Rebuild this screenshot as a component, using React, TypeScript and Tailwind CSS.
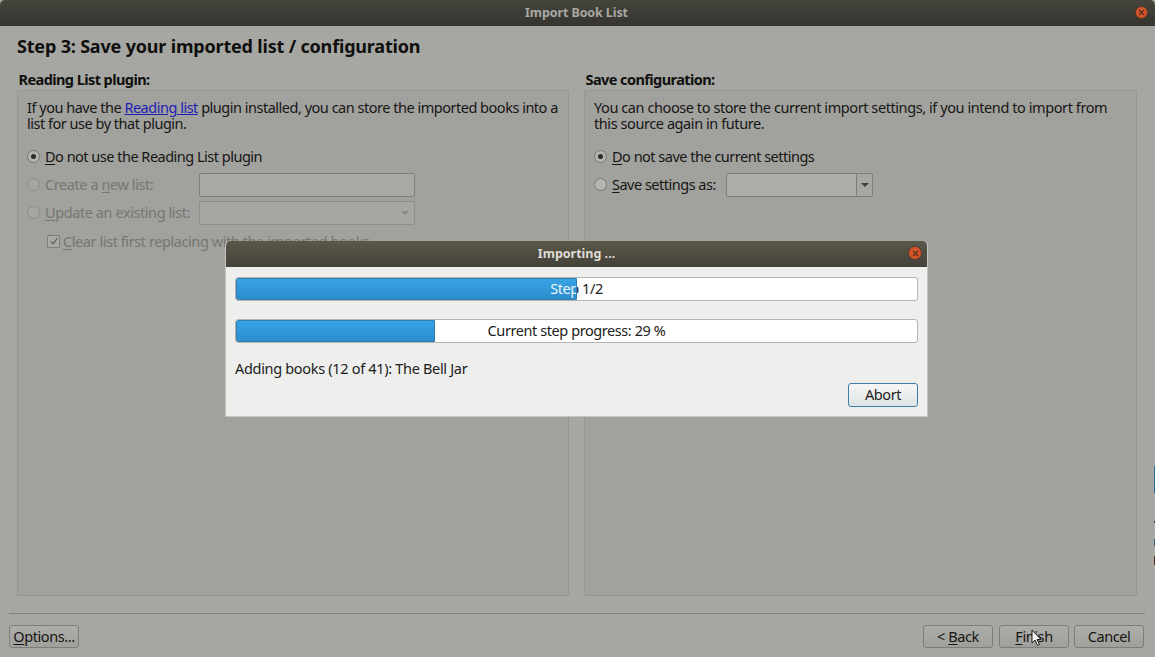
import { ReactNode } from 'react';

const FONT = "font-['Noto_Sans','Open_Sans',sans-serif]";

function Key({ children }: { children: ReactNode }) {
  return <span className="underline decoration-1 underline-offset-2">{children}</span>;
}

function CloseDot({ className }: { className: string }) {
  return (
    <span className={`flex items-center justify-center rounded-full bg-[#d4542a] border border-[#5a3a24] ${className}`}>
      <svg viewBox="0 0 10 10" className="w-[7px] h-[7px]">
        <path d="M1.5 1.5 L8.5 8.5 M8.5 1.5 L1.5 8.5" stroke="#57301c" strokeWidth="1.8" />
      </svg>
    </span>
  );
}

function Radio({ checked, disabled }: { checked?: boolean; disabled?: boolean }) {
  return (
    <span className={`shrink-0 w-[13px] h-[13px] rounded-full border flex items-center justify-center ${disabled ? 'border-[#8c8c88] bg-[#a6a6a2]' : 'border-[#787874] bg-[#b4b4b0]'}`}>
      {checked && <span className="w-[5px] h-[5px] rounded-full bg-[#2c2c2a]" />}
    </span>
  );
}

function OptionRow({ checked, disabled, children }: { checked?: boolean; disabled?: boolean; children: ReactNode }) {
  return (
    <div className={`flex items-center gap-[5px] h-[23px] ${disabled ? 'text-[#777773]' : 'text-[#161615] tracking-[-0.5px]'}`}>
      <Radio checked={checked} disabled={disabled} />
      <span className="whitespace-nowrap mb-[2px]">{children}</span>
    </div>
  );
}

function WizardButton({ children, className }: { children: ReactNode; className?: string }) {
  return (
    <button className={`h-[23px] w-[70px] pb-[2px] rounded-[3px] border border-[#7d7d79] bg-gradient-to-b from-[#adada9] to-[#9f9f9b] text-[#161615] flex items-center justify-center ${className ?? ''}`}>
      {children}
    </button>
  );
}

function GroupBox({ title, children, className }: { title: string; children: ReactNode; className?: string }) {
  return (
    <section className={`flex flex-col ${className ?? ''}`}>
      <h2 className="h-[19px] pl-[1.5px] font-bold text-[#0f0f0e] leading-[17px] tracking-[-0.57px] whitespace-nowrap">{title}</h2>
      <div className="flex-1 border border-[#969692] rounded-[1px] bg-[#a1a19d] pl-[9px] pr-[8px] pt-[8px]">{children}</div>
    </section>
  );
}

function ProgressBar({ percent, label }: { percent: number; label: string }) {
  return (
    <div className="relative h-[24px] border border-[#b5b5b2] rounded-[3px] bg-white overflow-hidden text-[#1c1c1b]">
      <div className="h-full pb-[2px] flex items-center justify-center whitespace-nowrap">{label}</div>
      <div className="absolute left-0 top-0 bottom-0 overflow-hidden rounded-l-[2px] border border-[#2f7fb5] bg-gradient-to-b from-[#38a3e6] to-[#2d8dcb]" style={{ width: `${percent}%` }}>
        <div className="-ml-px -mt-px w-[681px] h-[22px] pb-[2px] flex items-center justify-center whitespace-nowrap text-[#e9f4fb]">{label}</div>
      </div>
    </div>
  );
}

export default function App() {
  return (
    <div className={`relative w-[1155px] h-[657px] overflow-hidden flex flex-col bg-[#a6a6a2] text-[14.5px] leading-[16px] tracking-[-0.42px] ${FONT}`}>
      <header className="h-[26px] shrink-0 flex items-center justify-center relative bg-gradient-to-b from-[#45443d] to-[#35342f] rounded-t-[5px]">
        <span className="text-[12.5px] font-bold text-[#a8a8a2] tracking-[-0.1px] pr-[2px]">Import Book List</span>
        <CloseDot className="absolute right-[7px] top-[6px] w-[13px] h-[13px]" />
      </header>

      <main className="flex-1 flex flex-col pl-[9px] pr-[10px] pb-[9px]">
        <h1 className="pl-[8px] pt-[8px] h-[45px] text-[18px] font-bold text-[#0f0f0e] leading-[24px] tracking-[-0.18px] whitespace-nowrap">
          Step 3: Save your imported list / configuration
        </h1>

        <div className="flex gap-[15px] pl-[8px] pr-[8px] h-[525px]">
          <GroupBox title="Reading List plugin:" className="w-[552px]">
            <p className="text-[#161615] mb-[14px] whitespace-nowrap tracking-[-0.485px]">
              If you have the <span className="text-[#1f1fb4] underline">Reading list</span> plugin installed, you can store the imported books into a
              <br />
              list for use by that plugin.
            </p>
            <OptionRow checked>
              <Key>D</Key>o not use the Reading List plugin
            </OptionRow>
            <div className="flex items-center h-[23px] mt-[5px]">
              <div className="w-[172px]">
                <OptionRow disabled>
                  Create a <Key>n</Key>ew list:
                </OptionRow>
              </div>
              <div className="w-[216px] h-[24px] rounded-[2px] border border-[#7d7d79] bg-[#a9a9a5]" />
            </div>
            <div className="flex items-center h-[23px] mt-[5px]">
              <div className="w-[172px]">
                <OptionRow disabled>
                  <Key>U</Key>pdate an existing list:
                </OptionRow>
              </div>
              <div className="w-[216px] h-[24px] rounded-[2px] border border-[#8e8e8a] bg-[#a6a6a2] flex items-center justify-end pr-[5px]">
                <span className="border-x-[4px] border-x-transparent border-t-[4px] border-t-[#8a8a86]" />
              </div>
            </div>
            <div className="flex items-center gap-[3px] ml-[20px] mt-[9px] text-[#777773]">
              <span className="w-[13px] h-[13px] border border-[#7e7e7a] rounded-[1px] bg-[#a9a9a5] flex items-center justify-center">
                <svg viewBox="0 0 12 12" className="w-[10px] h-[10px]">
                  <path d="M2 6.5 L5 9.5 L10 2.5" fill="none" stroke="#5c5c59" strokeWidth="1.4" />
                </svg>
              </span>
              <span className="whitespace-nowrap">
                <Key>C</Key>lear list first replacing with the imported books
              </span>
            </div>
          </GroupBox>

          <GroupBox title="Save configuration:" className="w-[553px]">
            <p className="text-[#161615] mb-[14px] whitespace-nowrap">
              You can choose to store the current import settings, if you intend to import from
              <br />
              this source again in future.
            </p>
            <OptionRow checked>
              <Key>D</Key>o not save the current settings
            </OptionRow>
            <div className="flex items-center h-[23px] mt-[5px]">
              <div className="w-[132px]">
                <OptionRow>
                  <Key>S</Key>ave settings as:
                </OptionRow>
              </div>
              <div className="w-[147px] h-[24px] rounded-[2px] border border-[#7d7d79] bg-[#adada9] flex">
                <div className="flex-1" />
                <div className="w-[16px] border-l border-[#7d7d79] bg-[#a6a6a2] flex items-center justify-center">
                  <span className="border-x-[4px] border-x-transparent border-t-[4px] border-t-[#3f3f3d]" />
                </div>
              </div>
            </div>
          </GroupBox>
        </div>

        <div className="mt-[17px] border-t border-[#7f7f7b]" />

        <footer className="mt-[11px] pr-[1px] flex items-center justify-between">
          <WizardButton>
            <span><Key>O</Key>ptions...</span>
          </WizardButton>
          <div className="flex gap-[6px]">
            <WizardButton>
              <span>&lt; <Key>B</Key>ack</span>
            </WizardButton>
            <WizardButton>
              <span><Key>F</Key>inish</span>
            </WizardButton>
            <WizardButton className="-ml-[1px]">Cancel</WizardButton>
          </div>
        </footer>
      </main>

      {/* desktop peeking past the window's right edge */}
      <div className="absolute right-0 top-[466px] w-px h-[27px] bg-[#1f6f9f]" />
      <div className="absolute right-0 top-[521px] w-px h-[2px] bg-[#3a3a38]" />
      <div className="absolute right-0 top-[539px] w-px h-[7px] bg-[#2f5f86]" />
      <div className="absolute right-0 top-[556px] w-px h-[9px] bg-[#5a2a18]" />

      {/* mouse pointer over Finish */}
      <svg viewBox="0 0 12 18" className="absolute left-[1031px] top-[629px] w-[12px] h-[18px]">
        <path d="M1 1 L1 14 L4 11 L6.5 16.5 L8.5 15.5 L6 10.5 L10 10.5 Z" fill="#f4f4f2" stroke="#1a1a1a" strokeWidth="1" />
      </svg>

      {/* progress dialog */}
      <div className="absolute left-[225px] top-[241px] w-[703px] h-[176px] flex flex-col rounded-t-[5px] overflow-hidden border-x border-b border-[#c4c4c1] bg-[#eeeeec]">
        <div className="h-[26px] shrink-0 flex items-center justify-center relative bg-gradient-to-b from-[#5a5848] to-[#44423a]">
          <span className="text-[12.5px] font-bold text-[#dedcd6] tracking-normal">Importing ...</span>
          <CloseDot className="absolute right-[5px] top-[5px] w-[14px] h-[14px]" />
        </div>
        <div className="flex-1 flex flex-col pl-[9px] pr-[9px] pt-[10px] text-[#1c1c1b]">
          <ProgressBar percent={50} label="Step 1/2" />
          <div className="mt-[18px]">
            <ProgressBar percent={29.2} label="Current step progress: 29 %" />
          </div>
          <div className="mt-[17px] h-[16px] whitespace-nowrap tracking-[-0.32px]">Adding books (12 of 41): The Bell Jar</div>
          <div className="mt-[7px] flex justify-end">
            <button className="w-[70px] h-[24px] pb-[2px] rounded-[3px] border border-[#3d7ea6] bg-gradient-to-b from-[#f6f6f5] to-[#dfe4e7] text-[#1c1c1b]">Abort</button>
          </div>
        </div>
      </div>
    </div>
  );
}
